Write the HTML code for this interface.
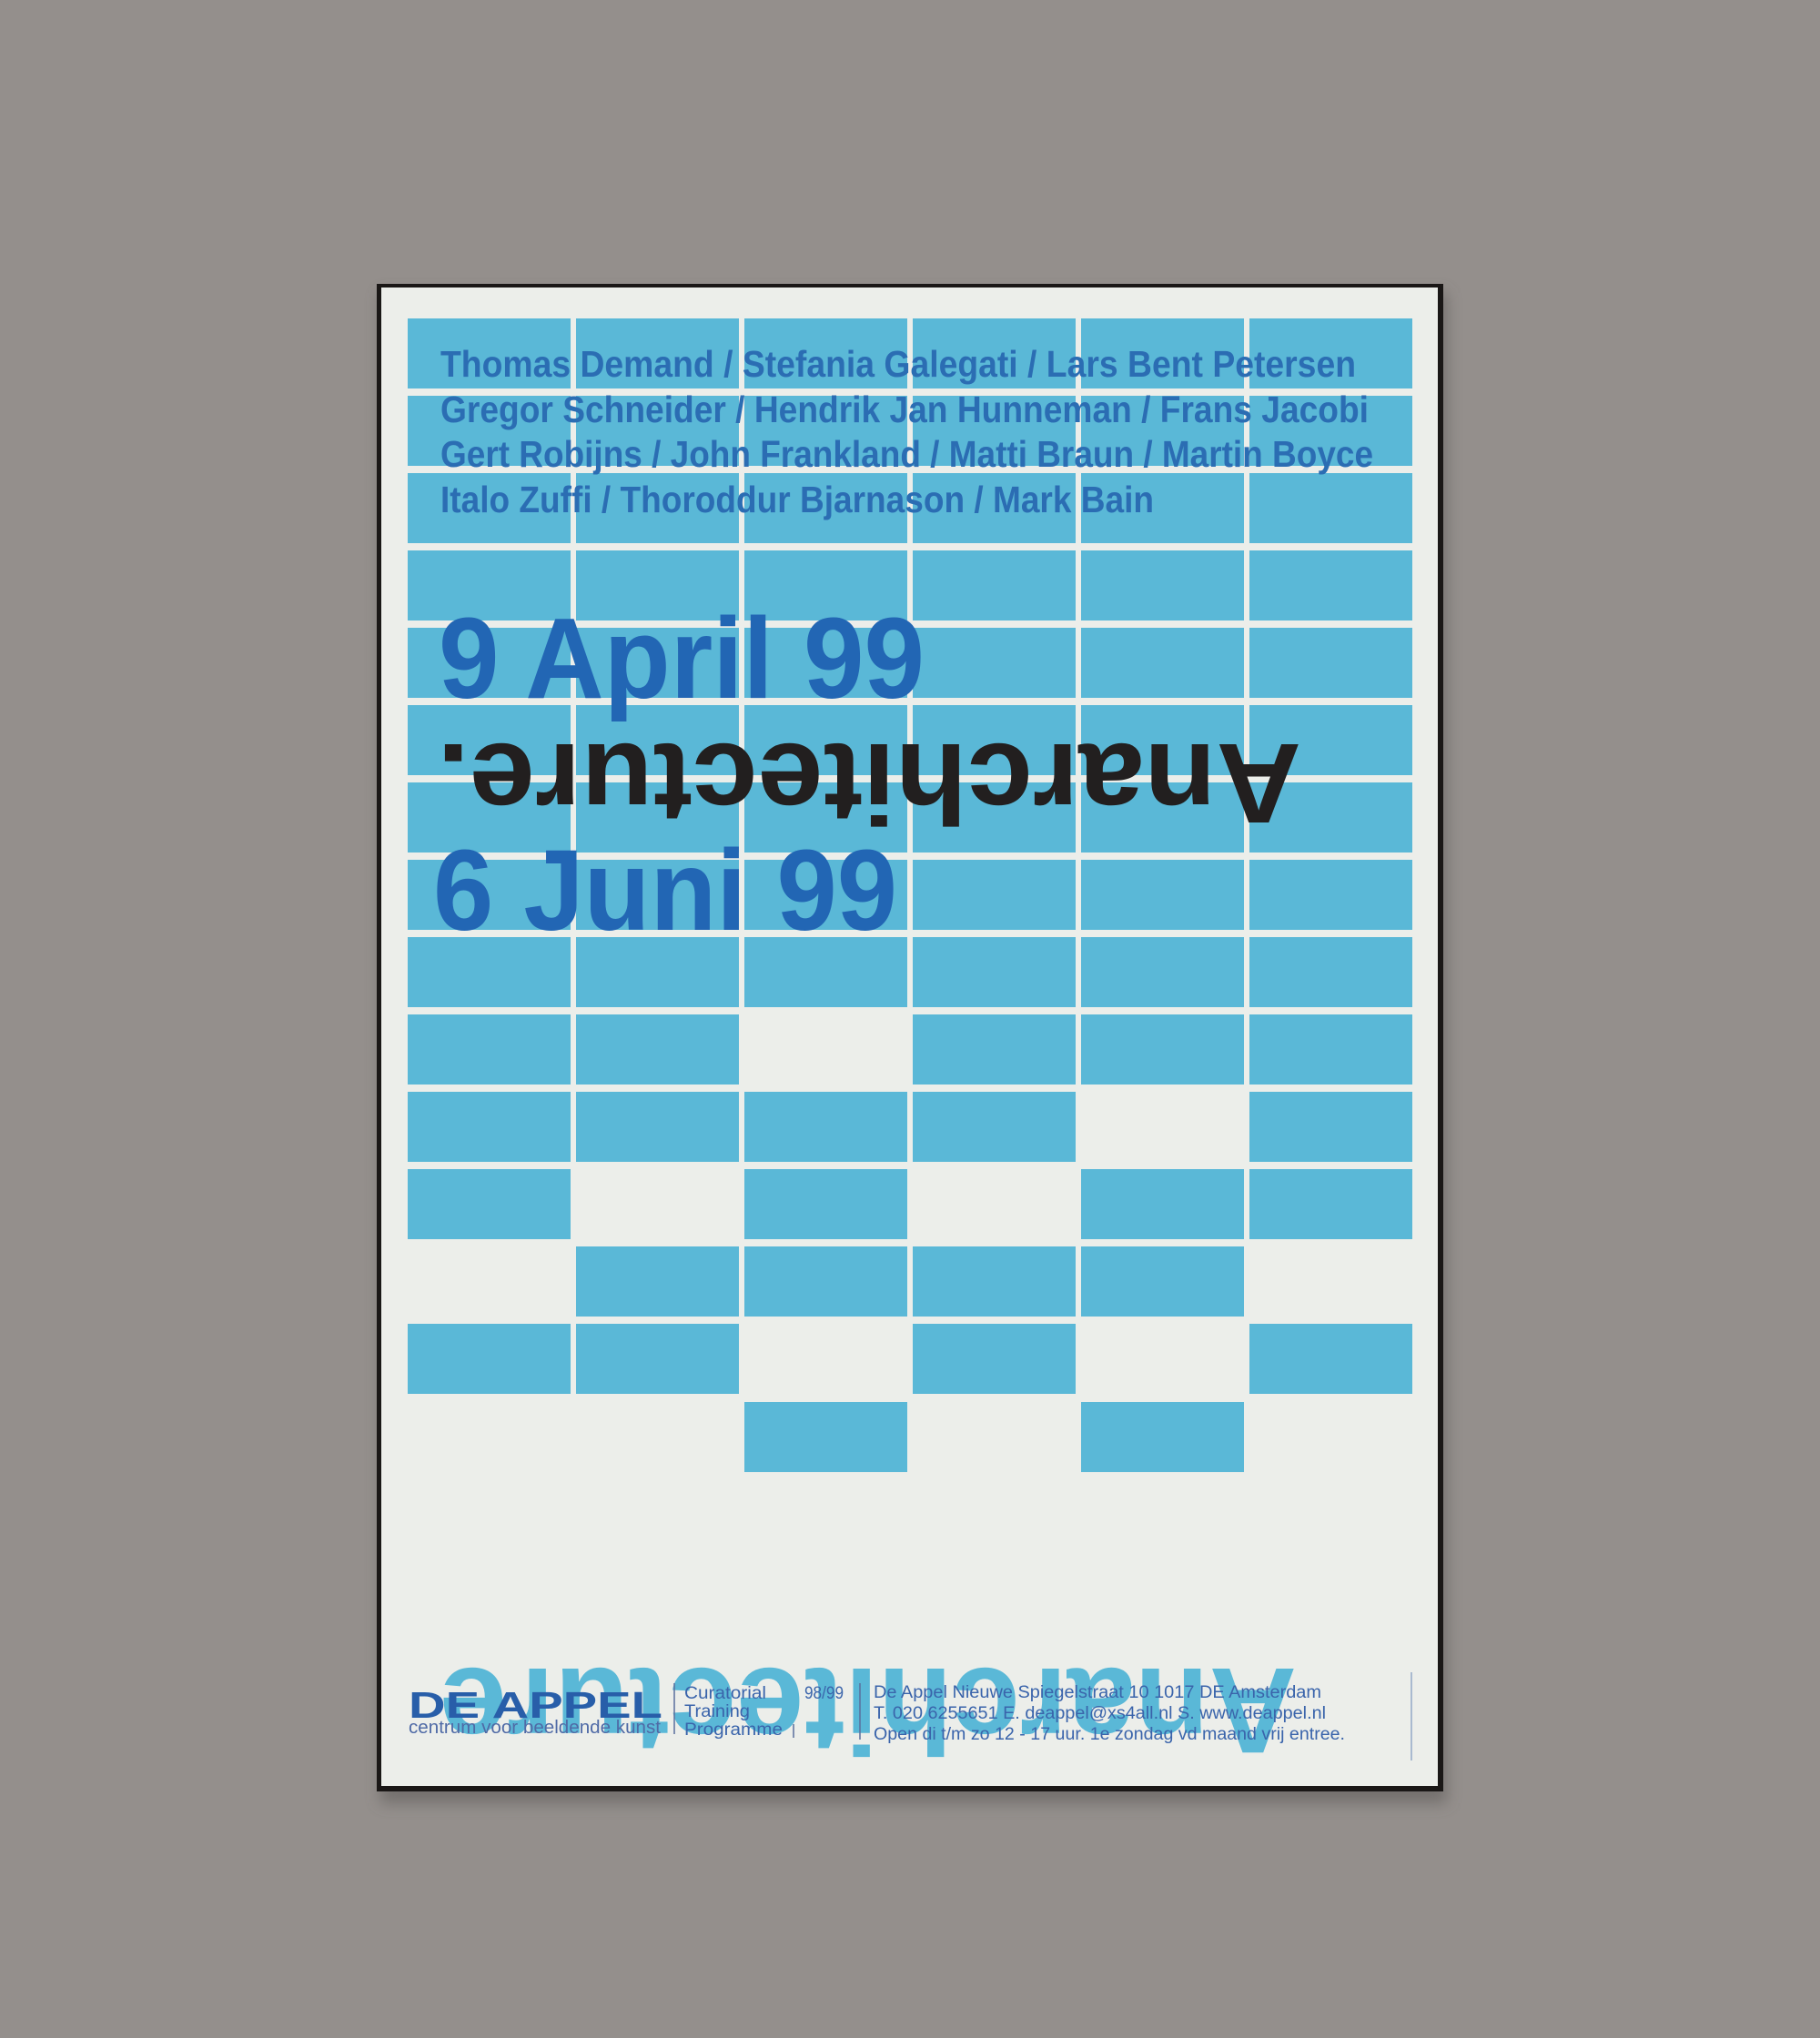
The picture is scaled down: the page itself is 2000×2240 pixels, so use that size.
<!DOCTYPE html>
<html><head><meta charset="utf-8"><style>
html,body{margin:0;padding:0;background:#948f8c;width:2000px;height:2240px;overflow:hidden}
svg{display:block}
</style></head><body>
<svg width="2000" height="2240" viewBox="0 0 2000 2240" xmlns="http://www.w3.org/2000/svg" font-family="'Liberation Sans', Arial, sans-serif">
<defs>
<filter id="sh" x="-5%" y="-5%" width="110%" height="115%"><feGaussianBlur stdDeviation="8"/></filter>
<g id="r">
<rect x="448" y="0" width="179" height="77"/><rect x="633" y="0" width="179" height="77"/><rect x="818" y="0" width="179" height="77"/><rect x="1003" y="0" width="179" height="77"/><rect x="1188" y="0" width="179" height="77"/><rect x="1373" y="0" width="179" height="77"/>
</g>
</defs>
<rect x="418" y="322" width="1172" height="1660" fill="#5a5654" opacity="0.55" filter="url(#sh)"/>
<rect x="414" y="312" width="1172" height="1657" fill="#1a1716"/>
<rect x="419" y="316" width="1161" height="1647" fill="#eceeea"/>
<g fill="#5ab8d7">
<use href="#r" y="350"/><use href="#r" y="435"/><use href="#r" y="520"/><use href="#r" y="605"/><use href="#r" y="690"/><use href="#r" y="775"/><use href="#r" y="860"/><use href="#r" y="945"/><use href="#r" y="1030"/>
<rect x="448" y="1115" width="179" height="77"/><rect x="633" y="1115" width="179" height="77"/><rect x="1003" y="1115" width="179" height="77"/><rect x="1188" y="1115" width="179" height="77"/><rect x="1373" y="1115" width="179" height="77"/>
<rect x="448" y="1200" width="179" height="77"/><rect x="633" y="1200" width="179" height="77"/><rect x="818" y="1200" width="179" height="77"/><rect x="1003" y="1200" width="179" height="77"/><rect x="1373" y="1200" width="179" height="77"/>
<rect x="448" y="1285" width="179" height="77"/><rect x="818" y="1285" width="179" height="77"/><rect x="1188" y="1285" width="179" height="77"/><rect x="1373" y="1285" width="179" height="77"/>
<rect x="633" y="1370" width="179" height="77"/><rect x="818" y="1370" width="179" height="77"/><rect x="1003" y="1370" width="179" height="77"/><rect x="1188" y="1370" width="179" height="77"/>
<rect x="448" y="1455" width="179" height="77"/><rect x="633" y="1455" width="179" height="77"/><rect x="1003" y="1455" width="179" height="77"/><rect x="1373" y="1455" width="179" height="77"/>
<rect x="818" y="1541" width="179" height="77"/><rect x="1188" y="1541" width="179" height="77"/>
</g>

<g fill="#2b6db3" font-weight="bold" font-size="41">
<text x="484" y="414" textLength="1006" lengthAdjust="spacingAndGlyphs">Thomas Demand / Stefania Galegati / Lars Bent Petersen</text>
<text x="484" y="464" textLength="1020" lengthAdjust="spacingAndGlyphs">Gregor Schneider / Hendrik Jan Hunneman / Frans Jacobi</text>
<text x="484" y="513" textLength="1025" lengthAdjust="spacingAndGlyphs">Gert Robijns / John Frankland / Matti Braun / Martin Boyce</text>
<text x="484" y="563" textLength="784" lengthAdjust="spacingAndGlyphs">Italo Zuffi / Thoroddur Bjarnason / Mark Bain</text>
</g>
<g fill="#2266b4" font-weight="bold" font-size="126">
<text x="482" y="767" textLength="534" lengthAdjust="spacingAndGlyphs">9 April 99</text>
<text x="476" y="1022" textLength="510" lengthAdjust="spacingAndGlyphs">6 Juni 99</text>
</g>
<text transform="rotate(180 955 818)" x="480" y="818" textLength="950" lengthAdjust="spacingAndGlyphs" fill="#221f1f" font-weight="bold" font-size="125">Anarchitecture.</text>

<text transform="rotate(180 954 1834)" x="483" y="1834" textLength="942" lengthAdjust="spacingAndGlyphs" fill="#5ab8d7" font-weight="bold" font-size="134">Anarchitecture</text>
<text x="449" y="1888" textLength="279" lengthAdjust="spacingAndGlyphs" fill="#285ea9" font-weight="bold" font-size="41">DE APPEL</text>
<text x="449" y="1905" textLength="277" lengthAdjust="spacingAndGlyphs" fill="#4f6aa6" font-size="20">centrum voor beeldende kunst</text>
<g fill="#3a64ab" font-size="19">
<text x="752" y="1867" textLength="90" lengthAdjust="spacingAndGlyphs">Curatorial</text>
<text x="752" y="1887" textLength="72" lengthAdjust="spacingAndGlyphs">Training</text>
<text x="752" y="1907" textLength="108" lengthAdjust="spacingAndGlyphs">Programme</text>
<text x="884" y="1867" textLength="43" lengthAdjust="spacingAndGlyphs">98/99</text>
<text x="960" y="1866" textLength="492" lengthAdjust="spacingAndGlyphs">De Appel Nieuwe Spiegelstraat 10 1017 DE Amsterdam</text>
<text x="960" y="1889" textLength="497" lengthAdjust="spacingAndGlyphs">T. 020 6255651 E. deappel@xs4all.nl S. www.deappel.nl</text>
<text x="960" y="1912" textLength="518" lengthAdjust="spacingAndGlyphs">Open di t/m zo 12 - 17 uur. 1e zondag vd maand vrij entree.</text>
</g>
<g stroke="#5a6f9c" stroke-width="1.5">
<line x1="741" y1="1850" x2="741" y2="1906"/>
<line x1="872" y1="1895" x2="872" y2="1910"/>
<line x1="945" y1="1850" x2="945" y2="1912"/>
</g>
<line x1="1551" y1="1838" x2="1551" y2="1935" stroke="#a9bad0" stroke-width="2"/>
</svg>
</body></html>
